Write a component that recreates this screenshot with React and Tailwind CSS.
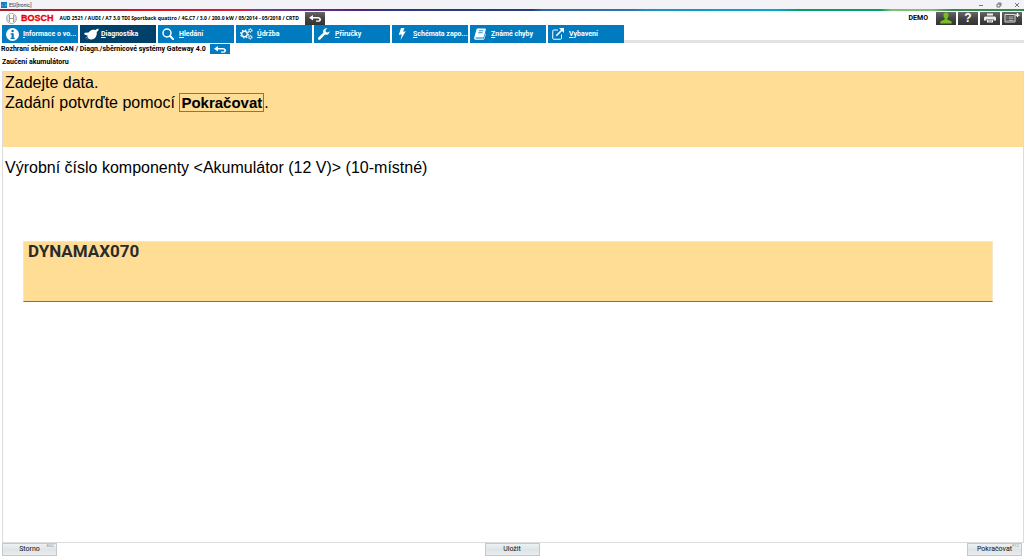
import React from "react";

const fill = "h-3 w-3 shrink-0";

const InfoIcon = () => (
  <svg viewBox="0 0 24 24" className="h-[13px] w-[13px] shrink-0" aria-hidden="true">
    <circle cx="12" cy="12" r="12" fill="#fff" />
    <circle cx="12.2" cy="5.6" r="2.3" fill="#007bc0" />
    <path d="M8.5 9.5h5.8v8.3h1.9v2.4H8.3v-2.4h2V12H8.5z" fill="#007bc0" />
  </svg>
);
const DiagIcon = () => (
  <svg viewBox="0 0 30 24" className="h-3 w-[15px] shrink-0" aria-hidden="true">
    <path d="M29 1l-3 1-3 2c-4-1-8-.5-11 2L9 9 2 9.500c-2 .5-2 3 0 4l5 1.500c0 4 2 7.500 6 8 5 .5 9-2 11-6 1.500-3 2-6 1.500-9L29 4.500z" fill="#fff" />
    <path d="M8 17l-5 3M9 20l-3 3" stroke="#fff" strokeWidth="1" fill="none" />
  </svg>
);
const SearchIcon = () => (
  <svg viewBox="0 0 24 24" className={fill} fill="none" stroke="#fff" aria-hidden="true">
    <circle cx="10" cy="10" r="8" strokeWidth="3" />
    <path d="M16 16l6.500 6.500" strokeWidth="4" strokeLinecap="round" />
  </svg>
);
const GearsIcon = () => (
  <svg viewBox="0 0 26 24" className="h-3 w-[13px] shrink-0" fill="none" stroke="#fff" aria-hidden="true">
    <circle cx="9" cy="12" r="5.500" strokeWidth="2.600" />
    <circle cx="9" cy="12" r="7.800" strokeWidth="2.400" strokeDasharray="3.060 3.060" />
    <circle cx="20.500" cy="5" r="2.600" strokeWidth="1.800" />
    <circle cx="20.500" cy="5" r="4.100" strokeWidth="1.400" strokeDasharray="2.150 2.150" />
    <circle cx="20.500" cy="18.500" r="2.600" strokeWidth="1.800" />
    <circle cx="20.500" cy="18.500" r="4.100" strokeWidth="1.400" strokeDasharray="2.150 2.150" />
  </svg>
);
const WrenchIcon = () => (
  <svg viewBox="0 0 24 24" className={fill} aria-hidden="true">
    <path d="M23.500 6.500a7 7 0 0 1-9.400 6.600L4.600 22.800a2.700 2.700 0 0 1-3.900-3.800l9.900-9.300A7 7 0 0 1 18.700.500l-3.600 3.900.7 3.700 3.800.7z" fill="#fff" />
  </svg>
);
const BoltIcon = () => (
  <svg viewBox="0 0 24 24" className={fill} aria-hidden="true">
    <path d="M10 0h7l-3 7.500 5.500-1L9 24l2.600-11.500L5.500 14z" fill="#fff" />
  </svg>
);
const BookIcon = () => (
  <svg viewBox="0 0 24 24" className={fill} aria-hidden="true">
    <path d="M7 1h15.500c1 0 1.500 1 1.200 2l-4 14.500c-.3 1-1 1.500-2 1.500H4c-2 0-2 2 0 2h14.500c1 0 1.600-.5 2-1.500l2.500-9 .8 1.500-2.600 9c-.5 1.500-1.500 2.300-3 2.300H3c-2.500 0-3.500-2-2.500-4.500L5 3c.3-1.200 1-2 2-2z" fill="#fff" />
    <path d="M9.500 5.500h9M8.300 9.500h9" stroke="#007bc0" strokeWidth="1.700" />
  </svg>
);
const ExternalIcon = () => (
  <svg viewBox="0 0 24 24" className={fill} fill="none" stroke="#fff" aria-hidden="true">
    <path d="M12 4H3.500Q1.500 4 1.500 6v14.500q0 2 2 2H17q2 0 2-2V13" strokeWidth="2" />
    <path d="M8.500 15.500L20 4" strokeWidth="3.200" />
    <path d="M14 0h10v10z" fill="#fff" stroke="none" />
  </svg>
);
const BackIcon = () => (
  <svg viewBox="0 0 24 14" className="h-[7px] w-3" aria-hidden="true">
    <path d="M0 5.500L8 0v3.800h9c5 0 7 2.200 7 5s-2 4.700-6 4.700h-4v-2.700h3.500c2 0 3-.7 3-2s-1-1.700-3-1.700H8V11z" fill="#fff" />
  </svg>
);

const tabs = [
  ["Informace o vo...", InfoIcon],
  ["Diagnostika", DiagIcon],
  ["Hledání", SearchIcon],
  ["Údržba", GearsIcon],
  ["Příručky", WrenchIcon],
  ["Schémata zapo...", BoltIcon],
  ["Známé chyby", BookIcon],
  ["Vybavení", ExternalIcon],
];

function TitleBar() {
  return (
    <div className="flex h-[9px] items-center justify-between bg-[#f3f2f6] pl-px pr-1">
      <div className="flex items-center gap-0.5">
        <svg viewBox="0 0 12 12" className="h-1.5 w-1.5" aria-hidden="true">
          <rect width="12" height="12" fill="#0b7bc4" />
          <path d="M2 4v4h3M7 4h3v4H7" stroke="#8cc8ee" fill="none" />
        </svg>
        <span className="font-[Roboto,sans-serif] text-[5px] leading-[8px] text-[#333]">ESI[tronic]</span>
      </div>
      <div className="flex items-center gap-[11px]">
        <button aria-label="Minimalizovat" className="flex h-[7px] w-[7px] items-center justify-center">
          <svg viewBox="0 0 6 6" className="h-1.5 w-1.5"><path d="M1 3.500h4" stroke="#555" strokeWidth=".8" /></svg>
        </button>
        <button aria-label="Obnovit" className="flex h-[7px] w-[7px] items-center justify-center">
          <svg viewBox="0 0 6 6" className="h-1.5 w-1.5" fill="none" stroke="#444" strokeWidth=".7"><path d="M1 2h3v3H1zM2 1h3v3" /></svg>
        </button>
        <button aria-label="Zavřít" className="flex h-[7px] w-[7px] items-center justify-center">
          <svg viewBox="0 0 6 6" className="h-1.5 w-1.5" stroke="#444" strokeWidth=".7"><path d="M1 1l4 4M5 1L1 5" /></svg>
        </button>
      </div>
    </div>
  );
}

const tool = "flex h-[13px] w-5 items-center justify-center bg-linear-to-b from-[#666] via-[#444] to-[#333]";

function Header() {
  return (
    <header className="flex h-3.5 items-center justify-between pl-1.5 pr-0.5">
      <div className="flex items-center">
        <svg viewBox="0 0 24 24" className="h-[11px] w-[11px]" fill="none" stroke="#8a8d90" aria-hidden="true">
          <circle cx="12" cy="12" r="11" strokeWidth="1.500" />
          <path d="M7.500 4.500v15M16.500 4.500v15M7.500 12h9" strokeWidth="2" />
          <path d="M7.500 4.500a9 9 0 0 0 0 15M16.500 4.500a9 9 0 0 1 0 15" strokeWidth="1.300" />
        </svg>
        <span className="ml-1 text-[9px] leading-3 font-bold text-[#ed0007] [-webkit-text-stroke:0.3px_#ed0007]">BOSCH</span>
        <span className="ml-1.5 whitespace-nowrap font-['Noto_Sans',sans-serif] text-[5px] leading-3 font-bold">
          AUD 2521 / AUDI / A7 3.0 TDI Sportback quattro / 4G,C7 / 3.0 / 200.0 kW / 05/2014 - 05/2018 / CRTD
        </span>
        <button aria-label="Zpět na vozidlo" className={tool + " ml-1.5"}><BackIcon /></button>
      </div>
      <div className="flex items-center gap-0.5">
        <span className="mr-1.5 font-[Roboto,sans-serif] text-[7px] leading-3 font-bold">DEMO</span>
        <button aria-label="Uživatel" className={tool}>
          <svg viewBox="0 0 24 24" className="h-3 w-3"><path d="M12 1c3.500 0 5.500 2.500 5 6-.2 2.500-1.200 4.500-2.500 5.500v2.500l7 3c1.500.7 2 2 2 5H.5c0-3 .5-4.300 2-5l7-3v-2.500C8.200 11.500 7.200 9.500 7 7c-.5-3.500 1.500-6 5-6z" fill="#78be20" /></svg>
        </button>
        <button aria-label="Nápověda" className={tool + " text-[12px] leading-3 font-bold text-white"}>?</button>
        <button aria-label="Tisk" className={tool}>
          <svg viewBox="0 0 24 20" className="h-2.5 w-3"><path d="M6 1h12v4H6zM2 7h20l2 2v6h-5v-3H5v3H0V9zM6 13h12v6H6z" fill="#eee" /><path d="M8 15h8M8 17h8" stroke="#777" /></svg>
        </button>
        <button aria-label="Přidat záznam" className={tool}>
          <svg viewBox="0 0 32 20" className="h-2.5 w-4" fill="none" stroke="#ddd"><path d="M2 3h20v15H2z" strokeWidth="2" /><path d="M5 8h2M9 8h10M5 11.500h2M9 11.500h10M5 15h2M9 15h10" strokeWidth="1.500" /><path d="M27 0v8M23 4h8" stroke="#fff" strokeWidth="2.500" /></svg>
        </button>
      </div>
    </header>
  );
}

function FootButton({ label, hint }) {
  return (
    <button className="relative h-[13px] w-[55px] border border-[#c3c8cc] bg-linear-to-b from-[#edf1f3] via-[#dfe4e7] to-[#e9edef] text-center font-[Roboto,sans-serif] text-[7px] leading-[11px] text-[#111]">
      {label}
      {hint && <span className="absolute top-0 right-0.5 text-[4px] leading-[4px] text-[#888]">{hint}</span>}
    </button>
  );
}

export default function App() {
  return (
    <div className="flex min-h-screen flex-col bg-white font-['Liberation_Sans',Arial,sans-serif] text-black">
      <TitleBar />
      <div className="h-0.5 bg-[linear-gradient(90deg,#b01c2e_0%,#b01c2e_12%,#e0101c_13%,#d81e3a_24%,#7d3a94_25%,#50237f_35%,#2d3486_38%,#263b80_52%,#2b66ac_53%,#2b76b4_62%,#1791c8_63%,#00a8d6_76%,#00a067_78%,#00a067_86%,#7dbf73_87%,#7dbf73_91%,#2c8f49_93%,#2c8f49_100%)]" />
      <Header />

      <nav className="flex h-[18px] items-stretch gap-0.5 pl-0.5">
        {tabs.map(([label, Icon], i) => (
          <a
            key={label}
            href="#"
            aria-current={i === 1 ? "page" : undefined}
            className={"flex w-[76px] items-center pl-1 font-[Roboto,sans-serif] text-[7px] leading-3 font-bold whitespace-nowrap text-white " + (i === 1 ? "bg-[#00416b]" : "bg-[#007bc0]")}
          >
            <span className="flex w-[17px] shrink-0 items-center"><Icon /></span>
            <span><span className="underline">{label[0]}</span>{label.slice(1)}</span>
          </a>
        ))}
        <div className="-ml-0.5 flex-1 self-end border-b-[3px] border-[#e2e2e2]" />
      </nav>

      <div className="flex h-3 items-center gap-1 pl-px">
        <span className="font-[Roboto,sans-serif] text-[7px] leading-3 font-bold">Rozhraní sběrnice CAN / Diagn./sběrnicové systémy Gateway 4.0</span>
        <button aria-label="Zpět" className="flex h-2.5 w-5 items-center justify-center bg-[#007bc0]"><BackIcon /></button>
      </div>
      <h1 className="h-4 pl-0.5 font-[Roboto,sans-serif] text-[7px] leading-[15px] font-bold">Zaučení akumulátoru</h1>

      <main className="ml-0.5 flex flex-1 flex-col border border-[#dcdcdc] text-[16px] leading-5">
        <section className="h-[75px] bg-[#ffdd95] px-0.5 pt-px">
          <p>Zadejte data.</p>
          <p>
            Zadání potvrďte pomocí <strong className="border border-[#777] px-px text-[15px]">Pokračovat</strong>.
          </p>
        </section>
        <label htmlFor="serial" className="px-0.5 pt-[11px]">
          Výrobní číslo komponenty &lt;Akumulátor (12 V)&gt; (10-místné)
        </label>
        <div className="flex pt-[63px] pr-[30px] pl-5">
          <textarea
            id="serial"
            defaultValue="DYNAMAX070"
            spellCheck="false"
            className="h-[61px] w-full resize-none overflow-hidden border border-[#f6e7c4] border-b-[#3e7fa8] bg-[#ffdd95] px-1 font-[Roboto,sans-serif] text-[17px] leading-[18px] font-bold text-[#2b2b2b] outline-none"
          />
        </div>
      </main>

      <footer className="flex items-start justify-between pr-0.5 pb-px pl-0.5">
        <FootButton label="Storno" hint="ESC" />
        <FootButton label="Uložit" />
        <FootButton label="Pokračovat" hint="F12" />
      </footer>
    </div>
  );
}
